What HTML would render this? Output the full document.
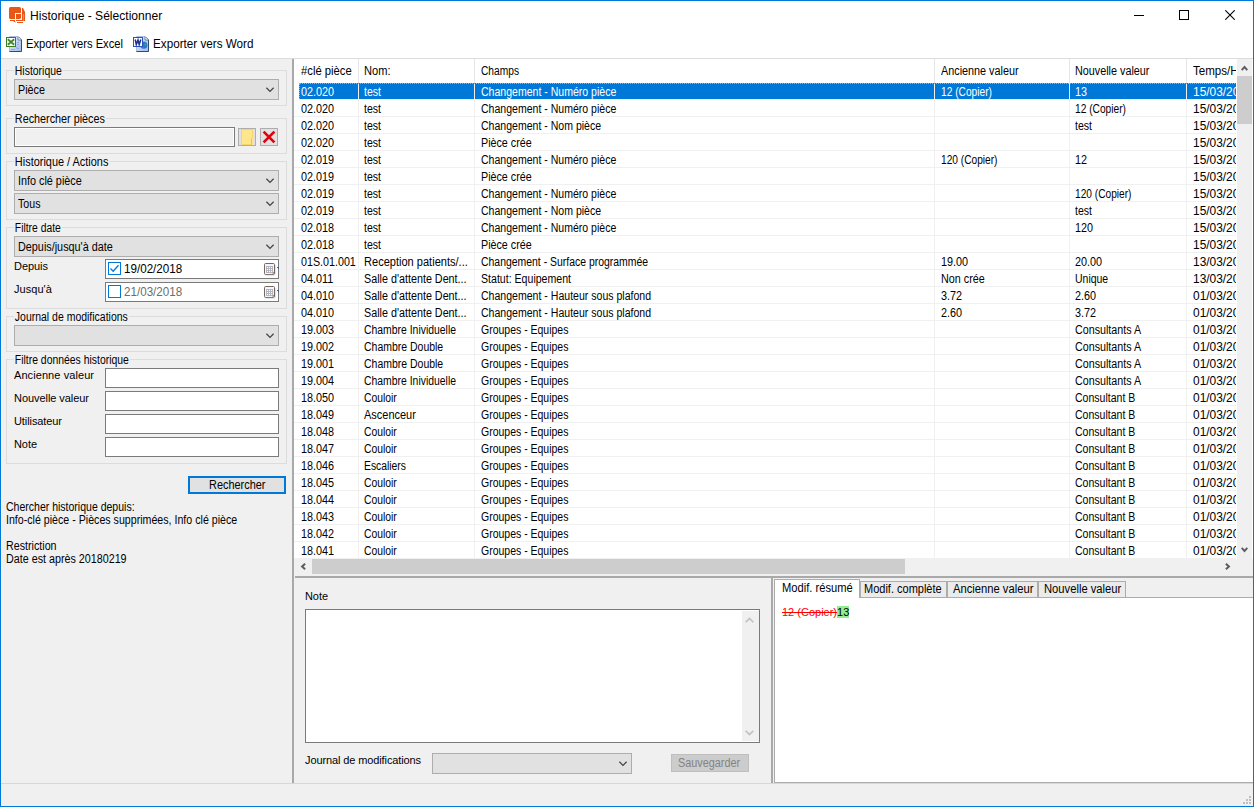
<!DOCTYPE html>
<html lang="fr">
<head>
<meta charset="utf-8">
<title>Historique - Sélectionner</title>
<style>
*{box-sizing:border-box;margin:0;padding:0}
html,body{width:1254px;height:807px;overflow:hidden;background:#f0f0f0}
body{font-family:"Liberation Sans",sans-serif;font-size:11px;color:#000;position:relative}
#win{position:absolute;left:0;top:0;width:1254px;height:807px;background:#f0f0f0;overflow:hidden}
#win div,#win span,#win svg{position:absolute}
#win span.i{position:static}
.t{white-space:nowrap;line-height:13px;height:13px}
#win .g{font-size:12.5px;line-height:14px;height:14px;transform-origin:0 0}
#frame{left:0;top:0;width:1254px;height:807px;border:1px solid #0078d7;z-index:50}
#cap{left:0;top:0;width:1254px;height:58px;background:#fff}
.seg{font-size:12.5px;line-height:14px;height:14px;white-space:nowrap;transform-origin:0 0}
.gb{left:6px;width:281px;border:1px solid #dcdcdc}
.gl{background:#f0f0f0;left:14px;padding:0 1px;white-space:nowrap;line-height:13px;height:13px}
.cb{left:14px;width:265px;height:21px;background:#e1e1e1;border:1px solid #adadad}
.cb .t{left:3px;top:3px}
.chev{right:3px;top:6px;width:11px;height:7px}
.in{left:105px;width:174px;height:20px;background:#fff;border:1px solid #7a7a7a}
.dtp{left:105px;width:174px;height:20px;background:#fff;border:1px solid #7a7a7a}
.ck{left:2px;top:2px;width:13px;height:13px;border:1px solid #0078d7;background:#fff}
#list{left:294px;top:59px;width:959px;height:500px;background:#fff;overflow:hidden}
#lvtop{left:0;top:58px;width:1254px;height:1px;background:#dcdcdc}
.r{left:0;width:943px;height:17px;border-bottom:1px solid #f0f0f0}
.r span{top:2px;white-space:nowrap}
.sel{background:#0078d7;color:#fff;left:5px;width:938px;height:17px}
.sel span{margin-left:-5px}
.vl{top:24px;width:1px;height:476px;background:#f0f0f0}
.tab{background:#ebebeb;border:1px solid #acacac;border-bottom:none}
.cal{width:11px;height:11px;border:1px solid #8d7b6d;background:#eef0f8;border-radius:1px;box-shadow:1px 1px 0 #b9aba0}
</style>
</head>
<body>
<div id="win">

<div id="cap"></div><div style="left:1px;top:59px;width:1px;height:724px;background:#fbf6f0"></div>
<svg style="left:9px;top:7px" width="17" height="17" viewBox="0 0 17 17">
 <rect x="0" y="0" width="12" height="12" rx="1.6" fill="#e8561a"/>
 <rect x="6" y="6" width="7" height="1" fill="#fff"/><rect x="6" y="6" width="1" height="8" fill="#fff"/>
 <path d="M13 1 h1 l2 4 v9 h-3 z" fill="#e8561a"/><rect x="14" y="7" width="1" height="7" fill="#f08a5a"/>
 <rect x="1" y="13" width="5" height="1" fill="#e8561a"/><rect x="7" y="13" width="6" height="1" fill="#e8561a"/>
 <path d="M4 13.5 L6.5 15" stroke="#e8561a" stroke-width="1"/>
 <rect x="8" y="15" width="6" height="1" fill="#e8561a"/>
</svg>
<div class="seg" style="left:30px;top:9px;transform:scaleX(.966)">Historique - Sélectionner</div>
<div style="left:1134px;top:15px;width:10px;height:1px;background:#000"></div>
<div style="left:1179px;top:10px;width:10px;height:10px;border:1px solid #000"></div>
<svg style="left:1225px;top:10px" width="10" height="10" viewBox="0 0 10 10"><path d="M0.3 0.3 L9.7 9.7 M9.7 0.3 L0.3 9.7" stroke="#000" stroke-width="1.1" fill="none"/></svg>
<svg style="left:6px;top:36px" width="16" height="16" viewBox="0 0 16 16">
 <defs><linearGradient id="pg" x1="0" y1="0" x2="1" y2="1"><stop offset="0" stop-color="#e6eefc"/><stop offset="1" stop-color="#9dbbee"/></linearGradient></defs>
 <path d="M3.5 0.5 H12 L15.5 4 V15.5 H3.5 Z" fill="url(#pg)" stroke="#a9bfe6"/>
 <path d="M12.3 0.8 L15.5 4 V15.5 H3.5" fill="none" stroke="#2f4a73"/>
 <path d="M12 0.8 V4 H15.2" fill="#fff" stroke="#54698c" stroke-width=".8"/>
 <path d="M5 13.5H9M11 6.5H13M11 8.5H13M11 10.5V12.5H13" stroke="#8fa9d8" fill="none"/>
 <rect x="0.5" y="1.5" width="9" height="9" fill="#fff" stroke="#3d7a1e"/>
 <path d="M1.8 3.3 L8.2 8.7 M8.2 3.3 L1.8 8.7" stroke="#3a8a2a" stroke-width="1.9"/>
</svg>
<div class="seg" style="left:26px;top:37px;transform:scaleX(.895)">Exporter vers Excel</div>
<svg style="left:133px;top:36px" width="16" height="16" viewBox="0 0 16 16">
 <path d="M3.5 0.5 H12 L15.5 4 V15.5 H3.5 Z" fill="url(#pg)" stroke="#a9bfe6"/>
 <path d="M12.3 0.8 L15.5 4 V15.5 H3.5" fill="none" stroke="#2f4a73"/>
 <path d="M12 0.8 V4 H15.2" fill="#fff" stroke="#54698c" stroke-width=".8"/>
 <circle cx="10.8" cy="9.2" r="3.6" fill="#2f6fd8"/>
 <path d="M11.5 6.5 Q14 7.5 13.5 10 Q12 11 11.5 9 Z" fill="#22b04a"/><path d="M8.5 11 Q9.5 10 10.5 11.5 Q9.5 12.8 8.5 11Z" fill="#22b04a"/>
 <rect x="0.5" y="1.5" width="9" height="9" fill="#fff" stroke="#2a56b8"/>
 <path d="M2.2 3.5 L3.3 8.5 L5 4 L6.2 8.5 L7.8 3.5" stroke="#1c2f8f" stroke-width="1.5" fill="none"/>
</svg>
<div class="seg" style="left:153px;top:37px;transform:scaleX(.935)">Exporter vers Word</div>


<div class="gb" style="top:70px;height:36px"></div>
<div class="gl g" style="top:64px;transform:scaleX(0.835);">Historique</div>
<div class="cb" style="top:79px;"><div class="t g" style="transform:scaleX(0.861);">Pièce</div><svg class="chev" viewBox="0 0 11 7"><path d="M2.4 1.8 L6 5.4 L9.6 1.8" fill="none" stroke="#444" stroke-width="1.25"/></svg></div>
<div class="gb" style="top:118px;height:36px"></div>
<div class="gl g" style="top:112px;transform:scaleX(0.864);">Rechercher pièces</div>
<div style="left:14px;top:127px;width:221px;height:20px;background:#f0f0f0;border:1px solid #7a7a7a;box-shadow:inset 0 0 0 1px #fff"></div>
<div style="left:238px;top:128px;width:18px;height:18px;background:#e1e1e1;border:1px solid #adadad">
 <div style="left:2px;top:0px;width:12px;height:16px;background:#ffe68c;border:1px solid #f5d567"></div>
 <div style="left:12px;top:9px;width:2px;height:7px;background:#ffe68c;border-left:1px solid #e8c455"></div>
</div>
<div style="left:260px;top:128px;width:18px;height:18px;background:#e1e1e1;border:1px solid #adadad">
 <svg style="left:1px;top:1px" width="14" height="14" viewBox="0 0 14 14"><path d="M1.6 1.6 L12.4 12.4 M12.4 1.6 L1.6 12.4" stroke="#e2000f" stroke-width="2.7" fill="none"/></svg>
</div>
<div class="gb" style="top:161px;height:59px"></div>
<div class="gl g" style="top:155px;transform:scaleX(0.874);">Historique / Actions</div>
<div class="cb" style="top:170px;"><div class="t g" style="transform:scaleX(0.865);">Info clé pièce</div><svg class="chev" viewBox="0 0 11 7"><path d="M2.4 1.8 L6 5.4 L9.6 1.8" fill="none" stroke="#444" stroke-width="1.25"/></svg></div>
<div class="cb" style="top:193px;"><div class="t g" style="transform:scaleX(0.850);">Tous</div><svg class="chev" viewBox="0 0 11 7"><path d="M2.4 1.8 L6 5.4 L9.6 1.8" fill="none" stroke="#444" stroke-width="1.25"/></svg></div>
<div class="gb" style="top:227px;height:82px"></div>
<div class="gl g" style="top:221px;transform:scaleX(0.827);">Filtre date</div>
<div class="cb" style="top:236px;"><div class="t g" style="transform:scaleX(0.866);">Depuis/jusqu'à date</div><svg class="chev" viewBox="0 0 11 7"><path d="M2.4 1.8 L6 5.4 L9.6 1.8" fill="none" stroke="#444" stroke-width="1.25"/></svg></div>
<div class="t" style="left:14px;top:260px;letter-spacing:-0.05px;">Depuis</div>
<div class="dtp" style="top:259px">
  <div class="ck"><svg style="left:0;top:0" width="11" height="11" viewBox="0 0 11 11"><path d="M1.5 5.5 L4.2 8.2 L9.5 2.2" fill="none" stroke="#0078d7" stroke-width="1.3"/></svg></div>
  <div class="t g" style="left:18px;top:2px;transform:scaleX(0.930);">19/02/2018</div>
  <svg style="left:158px;top:3px" width="13" height="13" viewBox="0 0 13 13"><rect x="0.5" y="0.5" width="10" height="11" rx="1.1" fill="#f3f5fc" stroke="#75665f"/><path d="M1.5 12.3 H10 Q11.8 12 11.6 10 V2" fill="none" stroke="#d9d9d9" stroke-width="0.8"/><rect x="2" y="3" width="7" height="7" fill="#b3b6c1"/><path d="M3 4h1M5 4h1M7 4h1M3 6h1M5 6h1M7 6h1M3 8h1M5 8h1M7 8h1" stroke="#fff" stroke-width="1" transform="translate(0,0.5)"/><path d="M8 10.5 L10.5 10.5 L10.5 8.5 Z" fill="#75665f"/></svg><div style="left:171px;top:7px;width:2px;height:1px;background:#3c5aa6"></div><div style="left:172px;top:8px;width:1px;height:1px;background:#3c5aa6"></div>
</div>
<div class="t" style="left:14px;top:283px;letter-spacing:0.04px;">Jusqu'à</div>
<div class="dtp" style="top:282px">
  <div class="ck"></div>
  <div class="t g" style="left:18px;top:2px;color:#6d6d6d;transform:scaleX(0.930);">21/03/2018</div>
  <svg style="left:158px;top:3px" width="13" height="13" viewBox="0 0 13 13"><rect x="0.5" y="0.5" width="10" height="11" rx="1.1" fill="#f3f5fc" stroke="#75665f"/><path d="M1.5 12.3 H10 Q11.8 12 11.6 10 V2" fill="none" stroke="#d9d9d9" stroke-width="0.8"/><rect x="2" y="3" width="7" height="7" fill="#b3b6c1"/><path d="M3 4h1M5 4h1M7 4h1M3 6h1M5 6h1M7 6h1M3 8h1M5 8h1M7 8h1" stroke="#fff" stroke-width="1" transform="translate(0,0.5)"/><path d="M8 10.5 L10.5 10.5 L10.5 8.5 Z" fill="#75665f"/></svg><div style="left:171px;top:7px;width:2px;height:1px;background:#3c5aa6"></div><div style="left:172px;top:8px;width:1px;height:1px;background:#3c5aa6"></div>
</div>
<div class="gb" style="top:316px;height:36px"></div>
<div class="gl g" style="top:310px;transform:scaleX(0.838);">Journal de modifications</div>
<div class="cb" style="top:325px;"><svg class="chev" viewBox="0 0 11 7"><path d="M2.4 1.8 L6 5.4 L9.6 1.8" fill="none" stroke="#444" stroke-width="1.25"/></svg></div>
<div class="gb" style="top:359px;height:105px"></div>
<div class="gl g" style="top:353px;transform:scaleX(0.833);">Filtre données historique</div>
<div class="t" style="left:14px;top:369px;letter-spacing:0.08px;">Ancienne valeur</div>
<div class="in" style="top:368px"></div>
<div class="t" style="left:14px;top:392px;letter-spacing:-0.06px;">Nouvelle valeur</div>
<div class="in" style="top:391px"></div>
<div class="t" style="left:14px;top:415px;letter-spacing:-0.09px;">Utilisateur</div>
<div class="in" style="top:414px"></div>
<div class="t" style="left:14px;top:438px;letter-spacing:-0.08px;">Note</div>
<div class="in" style="top:437px"></div>
<div style="left:188px;top:476px;width:98px;height:18px;background:#e1e1e1;border:2px solid #0078d7"><div class="t g" style="left:19px;top:0px;transform:scaleX(0.873);">Rechercher</div></div>
<div class="t g" style="left:6px;top:500px;transform:scaleX(0.841);">Chercher historique depuis:</div>
<div class="t g" style="left:6px;top:513px;transform:scaleX(0.851);">Info-clé pièce - Pièces supprimées, Info clé pièce</div>
<div class="t g" style="left:6px;top:539px;transform:scaleX(0.856);">Restriction</div>
<div class="t g" style="left:6px;top:552px;transform:scaleX(0.859);">Date est après 20180219</div>


<div id="lvtop"></div>
<div id="list"><div id="lc" style="left:0;top:0;width:942px;height:500px;overflow:hidden">
<span class="t g" style="left:7px;top:5px;transform:scaleX(0.900);">#clé pièce</span><span class="t g" style="left:70px;top:5px;transform:scaleX(0.886);">Nom:</span><span class="t g" style="left:187px;top:5px;transform:scaleX(0.816);">Champs</span><span class="t g" style="left:647px;top:5px;transform:scaleX(0.865);">Ancienne valeur</span><span class="t g" style="left:781px;top:5px;transform:scaleX(0.864);">Nouvelle valeur</span><span class="t g" style="left:899px;top:5px;transform:scaleX(0.925);">Temps/Heure</span><div style="left:64px;top:0;width:1px;height:24px;background:#e5e5e5"></div><div class="vl" style="left:64px"></div><div style="left:180px;top:0;width:1px;height:24px;background:#e5e5e5"></div><div class="vl" style="left:180px"></div><div style="left:640px;top:0;width:1px;height:24px;background:#e5e5e5"></div><div class="vl" style="left:640px"></div><div style="left:775px;top:0;width:1px;height:24px;background:#e5e5e5"></div><div class="vl" style="left:775px"></div><div style="left:892px;top:0;width:1px;height:24px;background:#e5e5e5"></div><div class="vl" style="left:892px"></div>
<div class="r sel" style="top:24px"><span class="g" style="left:7px;transform:scaleX(0.865);">02.020</span><span class="g" style="left:70px;transform:scaleX(0.844);">test</span><span class="g" style="left:187px;transform:scaleX(0.843);">Changement - Numéro pièce</span><span class="g" style="left:647px;transform:scaleX(0.815);">12 (Copier)</span><span class="g" style="left:781px;transform:scaleX(0.865);">13</span><span class="g" style="left:899px;transform:scaleX(.953);">15/03/2018</span></div>
<div class="r" style="top:41px"><span class="g" style="left:7px;transform:scaleX(0.865);">02.020</span><span class="g" style="left:70px;transform:scaleX(0.844);">test</span><span class="g" style="left:187px;transform:scaleX(0.843);">Changement - Numéro pièce</span><span class="g" style="left:781px;transform:scaleX(0.815);">12 (Copier)</span><span class="g" style="left:899px;transform:scaleX(.953);">15/03/2018</span></div>
<div class="r" style="top:58px"><span class="g" style="left:7px;transform:scaleX(0.865);">02.020</span><span class="g" style="left:70px;transform:scaleX(0.844);">test</span><span class="g" style="left:187px;transform:scaleX(0.843);">Changement - Nom pièce</span><span class="g" style="left:781px;transform:scaleX(0.844);">test</span><span class="g" style="left:899px;transform:scaleX(.953);">15/03/2018</span></div>
<div class="r" style="top:75px"><span class="g" style="left:7px;transform:scaleX(0.865);">02.020</span><span class="g" style="left:70px;transform:scaleX(0.844);">test</span><span class="g" style="left:187px;transform:scaleX(0.857);">Pièce crée</span><span class="g" style="left:899px;transform:scaleX(.953);">15/03/2018</span></div>
<div class="r" style="top:92px"><span class="g" style="left:7px;transform:scaleX(0.865);">02.019</span><span class="g" style="left:70px;transform:scaleX(0.844);">test</span><span class="g" style="left:187px;transform:scaleX(0.843);">Changement - Numéro pièce</span><span class="g" style="left:647px;transform:scaleX(0.813);">120 (Copier)</span><span class="g" style="left:781px;transform:scaleX(0.865);">12</span><span class="g" style="left:899px;transform:scaleX(.953);">15/03/2018</span></div>
<div class="r" style="top:109px"><span class="g" style="left:7px;transform:scaleX(0.865);">02.019</span><span class="g" style="left:70px;transform:scaleX(0.844);">test</span><span class="g" style="left:187px;transform:scaleX(0.857);">Pièce crée</span><span class="g" style="left:899px;transform:scaleX(.953);">15/03/2018</span></div>
<div class="r" style="top:126px"><span class="g" style="left:7px;transform:scaleX(0.865);">02.019</span><span class="g" style="left:70px;transform:scaleX(0.844);">test</span><span class="g" style="left:187px;transform:scaleX(0.843);">Changement - Numéro pièce</span><span class="g" style="left:781px;transform:scaleX(0.813);">120 (Copier)</span><span class="g" style="left:899px;transform:scaleX(.953);">15/03/2018</span></div>
<div class="r" style="top:143px"><span class="g" style="left:7px;transform:scaleX(0.865);">02.019</span><span class="g" style="left:70px;transform:scaleX(0.844);">test</span><span class="g" style="left:187px;transform:scaleX(0.843);">Changement - Nom pièce</span><span class="g" style="left:781px;transform:scaleX(0.844);">test</span><span class="g" style="left:899px;transform:scaleX(.953);">15/03/2018</span></div>
<div class="r" style="top:160px"><span class="g" style="left:7px;transform:scaleX(0.865);">02.018</span><span class="g" style="left:70px;transform:scaleX(0.844);">test</span><span class="g" style="left:187px;transform:scaleX(0.843);">Changement - Numéro pièce</span><span class="g" style="left:781px;transform:scaleX(0.865);">120</span><span class="g" style="left:899px;transform:scaleX(.953);">15/03/2018</span></div>
<div class="r" style="top:177px"><span class="g" style="left:7px;transform:scaleX(0.865);">02.018</span><span class="g" style="left:70px;transform:scaleX(0.844);">test</span><span class="g" style="left:187px;transform:scaleX(0.857);">Pièce crée</span><span class="g" style="left:899px;transform:scaleX(.953);">15/03/2018</span></div>
<div class="r" style="top:194px"><span class="g" style="left:7px;transform:scaleX(0.857);">01S.01.001</span><span class="g" style="left:70px;transform:scaleX(0.884);">Reception patients/...</span><span class="g" style="left:187px;transform:scaleX(0.835);">Changement - Surface programmée</span><span class="g" style="left:647px;transform:scaleX(0.865);">19.00</span><span class="g" style="left:781px;transform:scaleX(0.865);">20.00</span><span class="g" style="left:899px;transform:scaleX(.953);">13/03/2018</span></div>
<div class="r" style="top:211px"><span class="g" style="left:7px;transform:scaleX(0.865);">04.011</span><span class="g" style="left:70px;transform:scaleX(0.861);">Salle d'attente Dent...</span><span class="g" style="left:187px;transform:scaleX(0.847);">Statut: Equipement</span><span class="g" style="left:647px;transform:scaleX(0.862);">Non crée</span><span class="g" style="left:781px;transform:scaleX(0.838);">Unique</span><span class="g" style="left:899px;transform:scaleX(.953);">13/03/2018</span></div>
<div class="r" style="top:228px"><span class="g" style="left:7px;transform:scaleX(0.865);">04.010</span><span class="g" style="left:70px;transform:scaleX(0.861);">Salle d'attente Dent...</span><span class="g" style="left:187px;transform:scaleX(0.844);">Changement - Hauteur sous plafond</span><span class="g" style="left:647px;transform:scaleX(0.865);">3.72</span><span class="g" style="left:781px;transform:scaleX(0.865);">2.60</span><span class="g" style="left:899px;transform:scaleX(.953);">01/03/2018</span></div>
<div class="r" style="top:245px"><span class="g" style="left:7px;transform:scaleX(0.865);">04.010</span><span class="g" style="left:70px;transform:scaleX(0.861);">Salle d'attente Dent...</span><span class="g" style="left:187px;transform:scaleX(0.844);">Changement - Hauteur sous plafond</span><span class="g" style="left:647px;transform:scaleX(0.865);">2.60</span><span class="g" style="left:781px;transform:scaleX(0.865);">3.72</span><span class="g" style="left:899px;transform:scaleX(.953);">01/03/2018</span></div>
<div class="r" style="top:262px"><span class="g" style="left:7px;transform:scaleX(0.865);">19.003</span><span class="g" style="left:70px;transform:scaleX(0.833);">Chambre Inividuelle</span><span class="g" style="left:187px;transform:scaleX(0.839);">Groupes - Equipes</span><span class="g" style="left:781px;transform:scaleX(0.856);">Consultants A</span><span class="g" style="left:899px;transform:scaleX(.953);">01/03/2018</span></div>
<div class="r" style="top:279px"><span class="g" style="left:7px;transform:scaleX(0.865);">19.002</span><span class="g" style="left:70px;transform:scaleX(0.838);">Chambre Double</span><span class="g" style="left:187px;transform:scaleX(0.839);">Groupes - Equipes</span><span class="g" style="left:781px;transform:scaleX(0.856);">Consultants A</span><span class="g" style="left:899px;transform:scaleX(.953);">01/03/2018</span></div>
<div class="r" style="top:296px"><span class="g" style="left:7px;transform:scaleX(0.865);">19.001</span><span class="g" style="left:70px;transform:scaleX(0.838);">Chambre Double</span><span class="g" style="left:187px;transform:scaleX(0.839);">Groupes - Equipes</span><span class="g" style="left:781px;transform:scaleX(0.856);">Consultants A</span><span class="g" style="left:899px;transform:scaleX(.953);">01/03/2018</span></div>
<div class="r" style="top:313px"><span class="g" style="left:7px;transform:scaleX(0.865);">19.004</span><span class="g" style="left:70px;transform:scaleX(0.833);">Chambre Inividuelle</span><span class="g" style="left:187px;transform:scaleX(0.839);">Groupes - Equipes</span><span class="g" style="left:781px;transform:scaleX(0.856);">Consultants A</span><span class="g" style="left:899px;transform:scaleX(.953);">01/03/2018</span></div>
<div class="r" style="top:330px"><span class="g" style="left:7px;transform:scaleX(0.865);">18.050</span><span class="g" style="left:70px;transform:scaleX(0.828);">Couloir</span><span class="g" style="left:187px;transform:scaleX(0.839);">Groupes - Equipes</span><span class="g" style="left:781px;transform:scaleX(0.843);">Consultant B</span><span class="g" style="left:899px;transform:scaleX(.953);">01/03/2018</span></div>
<div class="r" style="top:347px"><span class="g" style="left:7px;transform:scaleX(0.865);">18.049</span><span class="g" style="left:70px;transform:scaleX(0.878);">Ascenceur</span><span class="g" style="left:187px;transform:scaleX(0.839);">Groupes - Equipes</span><span class="g" style="left:781px;transform:scaleX(0.843);">Consultant B</span><span class="g" style="left:899px;transform:scaleX(.953);">01/03/2018</span></div>
<div class="r" style="top:364px"><span class="g" style="left:7px;transform:scaleX(0.865);">18.048</span><span class="g" style="left:70px;transform:scaleX(0.828);">Couloir</span><span class="g" style="left:187px;transform:scaleX(0.839);">Groupes - Equipes</span><span class="g" style="left:781px;transform:scaleX(0.843);">Consultant B</span><span class="g" style="left:899px;transform:scaleX(.953);">01/03/2018</span></div>
<div class="r" style="top:381px"><span class="g" style="left:7px;transform:scaleX(0.865);">18.047</span><span class="g" style="left:70px;transform:scaleX(0.828);">Couloir</span><span class="g" style="left:187px;transform:scaleX(0.839);">Groupes - Equipes</span><span class="g" style="left:781px;transform:scaleX(0.843);">Consultant B</span><span class="g" style="left:899px;transform:scaleX(.953);">01/03/2018</span></div>
<div class="r" style="top:398px"><span class="g" style="left:7px;transform:scaleX(0.865);">18.046</span><span class="g" style="left:70px;transform:scaleX(0.828);">Escaliers</span><span class="g" style="left:187px;transform:scaleX(0.839);">Groupes - Equipes</span><span class="g" style="left:781px;transform:scaleX(0.843);">Consultant B</span><span class="g" style="left:899px;transform:scaleX(.953);">01/03/2018</span></div>
<div class="r" style="top:415px"><span class="g" style="left:7px;transform:scaleX(0.865);">18.045</span><span class="g" style="left:70px;transform:scaleX(0.828);">Couloir</span><span class="g" style="left:187px;transform:scaleX(0.839);">Groupes - Equipes</span><span class="g" style="left:781px;transform:scaleX(0.843);">Consultant B</span><span class="g" style="left:899px;transform:scaleX(.953);">01/03/2018</span></div>
<div class="r" style="top:432px"><span class="g" style="left:7px;transform:scaleX(0.865);">18.044</span><span class="g" style="left:70px;transform:scaleX(0.828);">Couloir</span><span class="g" style="left:187px;transform:scaleX(0.839);">Groupes - Equipes</span><span class="g" style="left:781px;transform:scaleX(0.843);">Consultant B</span><span class="g" style="left:899px;transform:scaleX(.953);">01/03/2018</span></div>
<div class="r" style="top:449px"><span class="g" style="left:7px;transform:scaleX(0.865);">18.043</span><span class="g" style="left:70px;transform:scaleX(0.828);">Couloir</span><span class="g" style="left:187px;transform:scaleX(0.839);">Groupes - Equipes</span><span class="g" style="left:781px;transform:scaleX(0.843);">Consultant B</span><span class="g" style="left:899px;transform:scaleX(.953);">01/03/2018</span></div>
<div class="r" style="top:466px"><span class="g" style="left:7px;transform:scaleX(0.865);">18.042</span><span class="g" style="left:70px;transform:scaleX(0.828);">Couloir</span><span class="g" style="left:187px;transform:scaleX(0.839);">Groupes - Equipes</span><span class="g" style="left:781px;transform:scaleX(0.843);">Consultant B</span><span class="g" style="left:899px;transform:scaleX(.953);">01/03/2018</span></div>
<div class="r" style="top:483px"><span class="g" style="left:7px;transform:scaleX(0.865);">18.041</span><span class="g" style="left:70px;transform:scaleX(0.828);">Couloir</span><span class="g" style="left:187px;transform:scaleX(0.839);">Groupes - Equipes</span><span class="g" style="left:781px;transform:scaleX(0.843);">Consultant B</span><span class="g" style="left:899px;transform:scaleX(.953);">01/03/2018</span></div>
<div style="left:64px;top:24px;width:1px;height:16px;background:#f0f0f0"></div><div style="left:180px;top:24px;width:1px;height:16px;background:#f0f0f0"></div><div style="left:640px;top:24px;width:1px;height:16px;background:#f0f0f0"></div><div style="left:775px;top:24px;width:1px;height:16px;background:#f0f0f0"></div><div style="left:892px;top:24px;width:1px;height:16px;background:#f0f0f0"></div>
<div style="left:5px;top:24px;width:938px;height:1px;border-top:1px dotted #ff9a3c"></div>
<div style="left:5px;top:24px;width:1px;height:16px;border-left:1px dotted #ff9a3c"></div>
</div>
<div style="left:943px;top:0;width:15px;height:500px;background:#f0f0f0"></div>
<div style="left:943px;top:17px;width:15px;height:48px;background:#cdcdcd"></div>
<svg style="left:947px;top:6px" width="7" height="6" viewBox="0 0 7 6"><path d="M0 4.4 L1.4 5.8 L3.5 3.5 L5.6 5.8 L7 4.4 L3.5 0.6 Z" fill="#5c5c5c"/></svg>
<svg style="left:947px;top:488px" width="7" height="6" viewBox="0 0 7 6"><path d="M0 1.6 L1.4 0.2 L3.5 2.5 L5.6 0.2 L7 1.6 L3.5 5.4 Z" fill="#5c5c5c"/></svg>
</div>
<div style="left:295px;top:559px;width:958px;height:17px;background:#f0f0f0"></div>
<div style="left:312px;top:559px;width:593px;height:15px;background:#cdcdcd"></div>
<svg style="left:300px;top:563px" width="6" height="7" viewBox="0 0 6 7"><path d="M4.4 0 L5.8 1.4 L3.5 3.5 L5.8 5.6 L4.4 7 L0.6 3.5 Z" fill="#5c5c5c"/></svg>
<svg style="left:1225px;top:563px" width="6" height="7" viewBox="0 0 6 7"><path d="M1.6 0 L0.2 1.4 L2.5 3.5 L0.2 5.6 L1.6 7 L5.4 3.5 Z" fill="#5c5c5c"/></svg>


<div style="left:292px;top:59px;width:2px;height:724px;background:#a9a9a9"></div>
<div style="left:295px;top:576px;width:958px;height:2px;background:#a9a9a9"></div>
<div style="left:771px;top:578px;width:2px;height:205px;background:#a9a9a9"></div>
<div class="t" style="left:305px;top:590px;letter-spacing:-0.08px;">Note</div>
<div style="left:305px;top:609px;width:455px;height:134px;background:#fff;border:1px solid #7a7a7a">
  <div style="left:436px;top:1px;width:17px;height:130px;background:#f0f0f0"></div>
  <svg style="left:439px;top:7px" width="9" height="6" viewBox="0 0 9 6"><path d="M0.7 5.2 L4.5 1.4 L8.3 5.2" fill="none" stroke="#bfbfbf" stroke-width="1.6"/></svg>
  <svg style="left:439px;top:120px" width="9" height="6" viewBox="0 0 9 6"><path d="M0.7 0.8 L4.5 4.6 L8.3 0.8" fill="none" stroke="#bfbfbf" stroke-width="1.6"/></svg>
</div>
<div class="t" style="left:305px;top:754px;letter-spacing:-0.11px;">Journal de modifications</div>
<div class="cb" style="left:432px;top:753px;width:200px"><svg class="chev" viewBox="0 0 11 7"><path d="M2.4 1.8 L6 5.4 L9.6 1.8" fill="none" stroke="#444" stroke-width="1.25"/></svg></div>
<div style="left:671px;top:754px;width:78px;height:18px;background:#cccccc;border:1px solid #bfbfbf"><div class="t g" style="left:6px;top:1px;color:#838383;transform:scaleX(0.867);">Sauvegarder</div></div>
<div style="left:774px;top:597px;width:480px;height:186px;background:#fff;border:1px solid #acacac;border-right:none"></div>
<div class="tab" style="left:860px;top:581px;width:87px;height:16px"><div class="t g" style="left:3px;top:0px;transform:scaleX(0.880);">Modif. complète</div></div>
<div class="tab" style="left:947px;top:581px;width:91px;height:16px"><div class="t g" style="left:5px;top:0px;transform:scaleX(.897)">Ancienne valeur</div></div>
<div class="tab" style="left:1038px;top:581px;width:88px;height:16px"><div class="t g" style="left:5px;top:0px;transform:scaleX(.897)">Nouvelle valeur</div></div>
<div style="left:774px;top:579px;width:86px;height:19px;background:#fff;border:1px solid #acacac;border-bottom:none"><div class="t g" style="left:7px;top:1px;transform:scaleX(.892)">Modif. résumé</div></div>
<div class="t" style="left:782px;top:606px;font-size:11px;line-height:12px;height:12px"><span class="i" style="color:#ff0000;text-decoration:line-through">12 (Copier)</span><span class="i" style="background:#90ee90">13</span></div>
<div style="left:0;top:783px;width:1254px;height:1px;background:#d7d7d7"></div>
<div style="left:1249px;top:796px;width:2px;height:2px;background:#bfbfbf"></div><div style="left:1246px;top:799px;width:2px;height:2px;background:#bfbfbf"></div><div style="left:1249px;top:799px;width:2px;height:2px;background:#bfbfbf"></div><div style="left:1243px;top:802px;width:2px;height:2px;background:#bfbfbf"></div><div style="left:1246px;top:802px;width:2px;height:2px;background:#bfbfbf"></div><div style="left:1249px;top:802px;width:2px;height:2px;background:#bfbfbf"></div>
<div id="frame"></div>
</div>
</body>
</html>
